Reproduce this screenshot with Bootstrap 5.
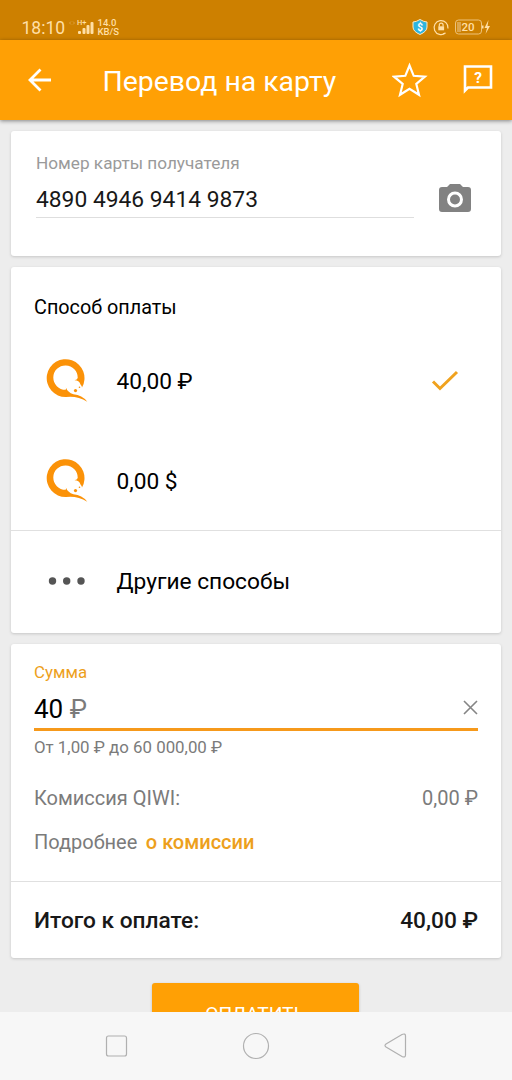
<!DOCTYPE html>
<html lang="ru">
<head>
<meta charset="utf-8">
<meta name="viewport" content="width=device-width, initial-scale=1">
<title>Перевод на карту</title>
<link href="https://cdn.jsdelivr.net/npm/bootstrap@5.3.0/dist/css/bootstrap.min.css" rel="stylesheet">
<script src="https://cdn.jsdelivr.net/npm/bootstrap@5.3.0/dist/js/bootstrap.bundle.min.js"></script>
<style>
body{font-family:Roboto,"Noto Sans",sans-serif;background:#ededed;color:#000;line-height:1}
svg{display:block;flex:none}
.phone{height:1080px}
.statusbar{height:40px;background:#cd8000;color:#ffdfa6;padding:14px 20px 0 21.5px}
.clock{font-size:17.5px;width:44px;line-height:20px}
.speed{font-size:9.5px;font-weight:500;line-height:9px;padding-top:4px}
.titlebar{height:79.5px;background:#ffa005;color:#fff;box-shadow:0 1px 4px rgba(0,0,0,.45);padding:0 18px 0 28px;z-index:1}
.page-title{font-size:28.4px;font-weight:400;margin-left:50.5px;line-height:34px;padding-top:4px}
.content{padding:11px 11px 0;gap:11px}
.panel{background:#fff;border-radius:3px;box-shadow:0 1px 3px rgba(0,0,0,.17)}
.panel-recipient{height:125px;padding:23px 29px 0 25px}
.panel-methods{height:366px}
.panel-amount{height:314px}
.hint{font-size:17.2px;line-height:18px;color:#9a9a9a}
.card-field{width:378px;height:39px;border-bottom:1.5px solid #dedede;margin-top:7px;font-size:22.8px;line-height:26px;padding-top:8px;color:#181818}
.method{height:100px;padding:0 42px 0 34px;font-size:22.7px}
.method span{padding-top:5px}
.method .pic{width:71.500px;flex:none}
.divide{border-top:1.5px solid #e0e0e0}
.orange{color:#eda01c}
.grey{color:#7b7b7b}
.sum-field{height:45px;border-bottom:3px solid #f6991b;font-size:26px;margin-top:5px;padding-top:5px;margin-bottom:7px}
.limits{font-size:16.85px;line-height:18px}
.line{font-size:20px;line-height:22px}
.heading{font-size:19.8px;height:63px;padding:30px 23px 0}
.total{font-size:22.7px;font-weight:500;color:#181818;height:76.5px;padding:3px 23px 0}
.btn-pay{width:207px;height:60px;background:#ffa005;color:#fff;font-size:19.2px;border-radius:3px;line-height:22px;padding:20px 0 18px;border:0;box-shadow:0 1px 3px rgba(0,0,0,.2);margin-top:14.5px;margin-right:1px}
.navkeys{height:68px;background:#f7f7f7;z-index:2}
</style>
</head>
<body>
<div class="phone d-flex flex-column overflow-hidden">
  <div class="statusbar d-flex align-items-start flex-shrink-0">
    <span class="clock mt-1">18:10</span>
    <svg width="32" height="22" viewBox="0 0 32 22" fill="#ffdfa6"><path d="M5 7.500l-1.500 1.500 1.500 1.500M7 7.500l1.500 1.500-1.500 1.500" fill="none" stroke="#dda64d" stroke-width=".8"/><text x="11" y="10.500" font-size="7.500" font-weight="500">H+</text><rect x="12" y="17" width="3" height="3" rx="1"/><rect x="16.500" y="14" width="3" height="6" rx="1"/><rect x="20.500" y="11" width="3" height="9" rx="1"/><rect x="24.500" y="8" width="3" height="12" rx="1"/></svg>
    <span class="speed">14.0<br>KB/S</span>
    <svg class="ms-auto" width="80" height="26" viewBox="412 14 80 26"><path d="M420 19.500q4 2.500 7 2.500v5q0 4.500-7 7.500-7-3-7-7.500v-5q3 0 7-2.500z" fill="#2eb5df" stroke="#ffe8c0"/><text x="420" y="30.500" font-size="10" font-weight="700" fill="#fff" text-anchor="middle">$</text><path d="M445.500 33a7 7 0 1 1 2.500-4.500M443 33.800l2.500-.8" fill="none" stroke="#ffdfa6" stroke-width="1.200"/><path d="M438.300 26.300h5.800v4h-5.800z" fill="#ffdfa6"/><path d="M439.300 26.500v-1.500a1.900 1.900 0 0 1 3.800 0v1.500" fill="none" stroke="#ffdfa6" stroke-width="1.200"/><rect x="455.500" y="20" width="26" height="14" rx="3" fill="none" stroke="#edc27a"/><rect x="457" y="22" width="4" height="10" fill="#dda64d"/><text x="468" y="31.200" font-size="11.500" font-weight="500" fill="#ffdfa6" text-anchor="middle">20</text><path d="M482 25.500h1.500v3h-1.500zM488.500 20l-4 8h2.500l-1.500 6 4.500-8h-2.500z" fill="#ffdfa6"/></svg>
  </div>
  <header class="titlebar d-flex align-items-center flex-shrink-0 position-relative">
    <svg width="24" height="24" viewBox="0 0 24 24" fill="none" stroke="#fff" stroke-width="2.800"><path d="M23 12H3M12.500 1.500L2 12l10.500 10.500"/></svg>
    <h1 class="page-title mb-0">Перевод на карту</h1>
    <svg class="ms-auto" width="102" height="40" viewBox="392 60 102 40" fill="none" stroke="#fff" stroke-width="2.200"><path d="M409.500 65.500l4.200 10.300 11.200.9-8.600 7.200 2.700 10.900-9.500-5.900-9.500 5.900 2.700-10.900-8.600-7.200 11.200-.9z"/><path d="M465 90.500V66.500h26v21h-23z" stroke-width="2.600"/><text x="478" y="82.500" font-size="15.500" font-weight="700" fill="#fff" stroke="none" text-anchor="middle">?</text></svg>
  </header>
  <main class="content d-flex flex-column flex-grow-1 overflow-hidden">
    <section class="panel panel-recipient flex-shrink-0 d-flex justify-content-between">
      <div><div class="hint">Номер карты получателя</div><div class="card-field">4890 4946 9414 9873</div></div>
      <svg class="mt-4" width="34" height="38" viewBox="0 -4 34 38"><path d="M12 2h10l3 3h5q3 0 3 3v19q0 3-3 3H4q-3 0-3-3V8q0-3 3-3h5z" fill="#828282"/><circle cx="17" cy="17.500" r="6.500" fill="none" stroke="#fff" stroke-width="3"/></svg>
    </section>
    <section class="panel panel-methods flex-shrink-0">
      <div class="line heading">Способ оплаты</div>
      <div class="method d-flex align-items-center"><div class="pic"><svg width="44" height="44" viewBox="45 358 44 44"><defs><g id="qiwi" fill="#fb9208"><path d="M82 387.500A18.900 18.900 0 1 0 66 397Q77 395.500 87.300 401.700Q82 395 73.500 394.300Q67.500 392.500 65.800 387.300Q66.500 389 65.500 389.800A12.200 12.200 0 1 1 77.700 378Q77.200 380 74.500 380.300Q79 380.200 80.500 384.500Q82 386 82 387.500z"/><circle cx="75.500" cy="390.600" r="1.600"/><circle cx="79.500" cy="387.300" r=".8"/></g></defs><use href="#qiwi"/></svg></div><span>40,00 ₽</span>
        <svg class="ms-auto" width="28" height="25" viewBox="0 -3 28 25"><path d="M2 11.500l7 7L26 2" fill="none" stroke="#f0a21e" stroke-width="3"/></svg></div>
      <div class="method d-flex align-items-center"><div class="pic"><svg width="44" height="44" viewBox="45 358 44 44"><use href="#qiwi"/></svg></div><span>0,00 $</span></div>
      <div class="method divide d-flex align-items-center"><div class="pic"><svg width="44" height="12" viewBox="0 -2 44 12" fill="#555"><circle cx="7.500" cy="5" r="3.700"/><circle cx="21.700" cy="5" r="3.700"/><circle cx="36" cy="5" r="3.700"/></svg></div><span>Другие способы</span></div>
    </section>
    <section class="panel panel-amount flex-shrink-0 d-flex flex-column">
      <div style="padding:19px 23px 0">
        <div class="orange limits">Сумма</div>
        <div class="sum-field d-flex align-items-center"><span>40 <span class="grey">₽</span></span><svg class="ms-auto" width="15" height="19" viewBox="0 0 15 19" fill="none" stroke="#858585" stroke-width="1.600"><path d="M1 1l13 13M14 1L1 14"/></svg></div>
        <div class="limits grey">От 1,00 ₽ до 60 000,00 ₽</div>
        <div class="line grey d-flex justify-content-between" style="margin-top:31px"><span>Комиссия QIWI:</span><span>0,00 ₽</span></div>
        <div class="line grey" style="margin-top:22px"><span>Подробнее</span><span class="orange" style="font-weight:500;margin-left:8.500px">о комиссии</span></div>
      </div>
      <div class="total divide d-flex align-items-center justify-content-between mt-auto"><span>Итого к оплате:</span><span>40,00 ₽</span></div>
    </section>
    <button class="btn btn-pay align-self-center flex-shrink-0 text-center d-block">ОПЛАТИТЬ</button>
  </main>
  <nav class="navkeys flex-shrink-0">
    <svg width="512" height="68" viewBox="0 1012 512 68" fill="none" stroke="#b0b0b0" stroke-width="1.200"><rect x="106.500" y="1036" width="20" height="20" rx="2"/><circle cx="256" cy="1046" r="12.500"/><path d="M386 1044l16-9.500q3.500-1.500 3.500 1.500v19q0 3-3.500 1.500l-16-9.500q-2-1.500 0-3z"/></svg>
  </nav>
</div>
</body>
</html>
